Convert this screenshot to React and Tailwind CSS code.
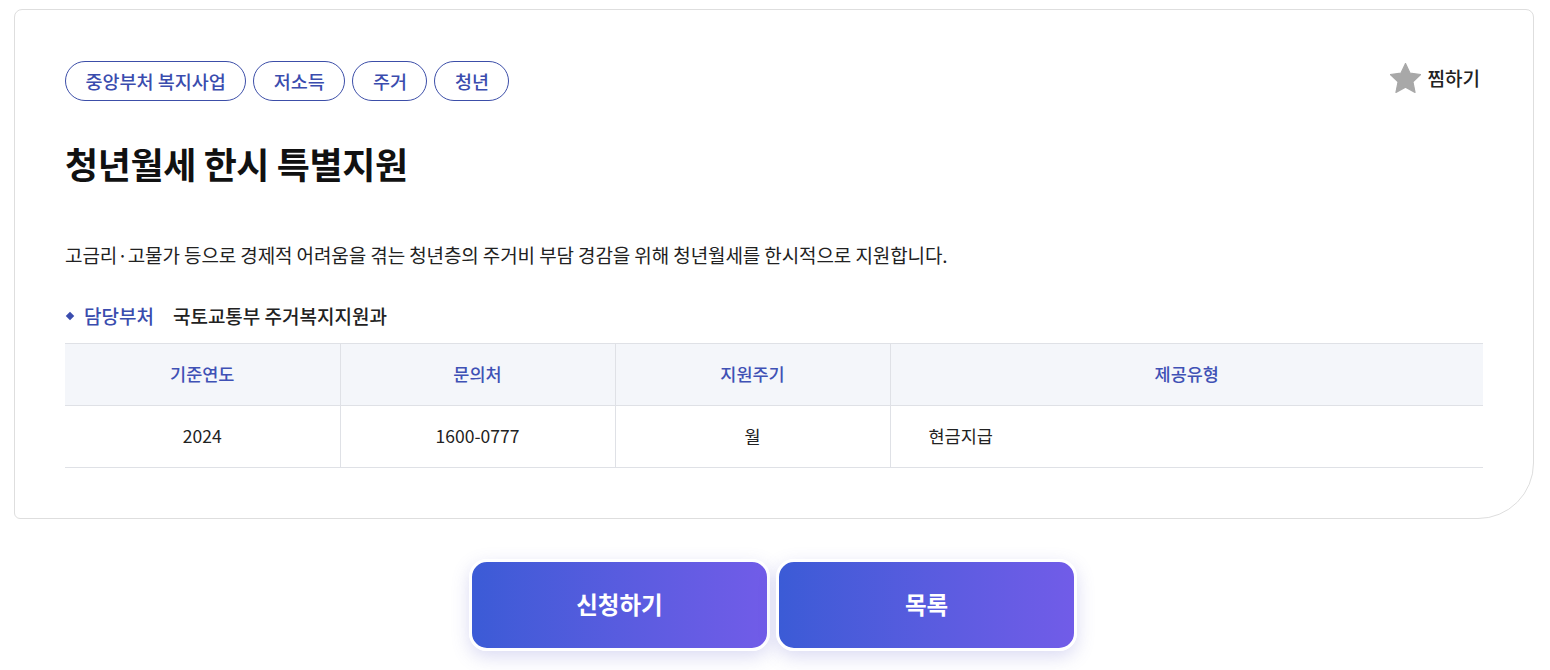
import React from "react";

const tags = ["중앙부처 복지사업", "저소득", "주거", "청년"];

const StarIcon = () => (
  <svg viewBox="1.6 1.6 20.8 20.8" className="w-[31px] h-[31px]" fill="#a8a8a8">
    <path
      d="M12 1.9l3.1 6.5 7.1.9-5.2 4.9 1.4 7.1L12 17.8l-6.4 3.5 1.4-7.1-5.2-4.9 7.1-.9z"
      stroke="#a8a8a8"
      strokeWidth="0.8"
      strokeLinejoin="round"
    />
  </svg>
);

export default function App() {
  return (
    <div
      className="min-h-screen bg-white text-[#111] pt-[9px] px-[14px]"
      style={{ fontFamily: '"Noto Sans CJK KR", "Noto Sans", sans-serif' }}
    >
      {/* Detail card */}
      <div className="w-[1520px] h-[510px] border border-[#dedede] rounded-tl-[8px] rounded-tr-[8px] rounded-bl-[6px] rounded-br-[56px] bg-white pt-[51px] px-[50px]">
        <div className="flex items-start justify-between">
          <div className="flex gap-[7px]">
            {tags.map((t) => (
              <span
                key={t}
                className="h-[40px] px-[19.5px] flex items-center rounded-full border border-[#3c4ea8] text-[#3a4cae] text-[18.5px] font-medium leading-none"
              >
                {t}
              </span>
            ))}
          </div>
          <button className="flex items-center gap-[7px] mr-[3px] mt-[2px] text-[19px] font-medium text-[#222]">
            <StarIcon />
            찜하기
          </button>
        </div>

        <h1 className="mt-[38px] text-[36px] font-bold leading-[48px] tracking-[-0.4px]">
          청년월세 한시 특별지원
        </h1>

        <p className="mt-[54px] text-[19px] leading-[28px] text-[#222] tracking-[-0.1px]">
          고금리·고물가 등으로 경제적 어려움을 겪는 청년층의 주거비 부담 경감을 위해 청년월세를 한시적으로 지원합니다.
        </p>

        <div className="mt-[33px] flex items-center text-[19px] leading-[28px]">
          <span className="w-[6px] h-[6px] bg-[#3a4cae] rotate-45 ml-[2px] mr-[11px]" />
          <span className="text-[#3a4cae] font-medium">담당부처</span>
          <span className="ml-[19px] text-[#222] font-medium">국토교통부 주거복지지원과</span>
        </div>

        <table className="mt-[13px] w-[1418px] border-collapse text-[17.5px]">
          <thead>
            <tr className="bg-[#f4f6fa] h-[62px] border-t border-b border-[#dfe1e6]">
              <th className="w-[275px] font-medium text-[#3f51b5] border-r border-[#dfe1e6]">기준연도</th>
              <th className="w-[275px] font-medium text-[#3f51b5] border-r border-[#dfe1e6]">문의처</th>
              <th className="w-[275px] font-medium text-[#3f51b5] border-r border-[#dfe1e6]">지원주기</th>
              <th className="font-medium text-[#3f51b5]">제공유형</th>
            </tr>
          </thead>
          <tbody>
            <tr className="h-[62px] border-b border-[#dfe1e6] text-[#222]">
              <td className="text-center border-r border-[#dfe1e6]">2024</td>
              <td className="text-center border-r border-[#dfe1e6]">1600-0777</td>
              <td className="text-center border-r border-[#dfe1e6]">월</td>
              <td className="pl-[38px]">현금지급</td>
            </tr>
          </tbody>
        </table>
      </div>

      {/* Actions */}
      <div className="mt-[40px] flex justify-center gap-[6px] pr-[4px]">
        {["신청하기", "목록"].map((label) => (
          <button
            key={label}
            className="w-[301px] h-[92px] rounded-[18px] border-[3px] border-white bg-gradient-to-r from-[#3b5bd6] to-[#715ce8] text-white text-[23.5px] font-bold shadow-[0_6px_18px_rgba(90,90,200,0.22)]"
          >
            {label}
          </button>
        ))}
      </div>
    </div>
  );
}
